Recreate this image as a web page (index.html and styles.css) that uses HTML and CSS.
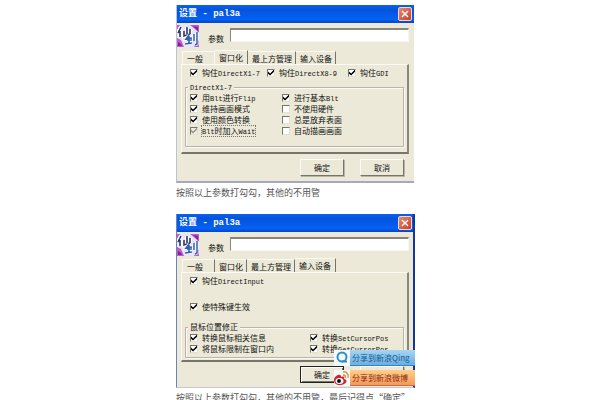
FILE: index.html
```html
<!DOCTYPE html>
<html lang="zh-CN">
<head>
    <meta charset="UTF-8">
    <meta name="viewport" content="width=device-width, initial-scale=1.0">
    <title>设置 - pal3a</title>
    <link rel="stylesheet" href="styles.css">
</head>
<body>
    <svg width="0" height="0" class="defs" aria-hidden="true">
        <symbol id="game-icon" viewBox="0 0 22 22">
            <rect width="22" height="22" fill="#e6e4fa"/>
            <path d="M0 0h3L0 5zM13 0h9v8l-3-3zM0 13l4 2 3 7H0zM20 17l2-2v7h-5z" fill="#c05ac8"/>
            <path d="M16 1l5 1v4l-3-3zM1 17l3 2 1 2H1z" fill="#7d2696"/>
            <path d="M4 2L1 8M3 6v6M7 6v5l6-2M10 2v7M13 4v5" stroke="#fff" stroke-width="4" fill="none"/>
            <path d="M4 2L1 8M3 6v6M7 6v5l6-2M10 2v7M13 4v5" stroke="#2c3566" stroke-width="1.6" fill="none"/>
            <path d="M12 10l-3 4 6-1M12 11v7M10 15h5M8 19l7-1M17 9v7M20 7v12l-2 1" stroke="#fff" stroke-width="3" fill="none"/>
            <path d="M12 10l-3 4 6-1M12 11v7M10 15h5M8 19l7-1M17 9v7M20 7v12l-2 1" stroke="#3560b0" stroke-width="1.5" fill="none"/>
        </symbol>
        <symbol id="close-icon" viewBox="0 0 14 14">
            <path d="M4 4l6 6M10 4l-6 6" stroke="#fff" stroke-width="1.7" stroke-linecap="round"/>
        </symbol>
    </svg>

    <main class="article">
        <section class="window">
            <header class="titlebar">
                <h2>设置 - pal3a</h2>
                <button class="close" aria-label="关闭"><svg><use href="#close-icon"/></svg></button>
            </header>
            <div class="params">
                <svg class="game-icon"><use href="#game-icon"/></svg>
                <label for="param1">参数</label>
                <input type="text" id="param1">
            </div>
            <nav class="tabs">
                <button class="first">一般</button>
                <button class="active">窗口化</button>
                <button>最上方管理</button>
                <button>输入设备</button>
            </nav>
            <div class="panel">
                <div class="hooks">
                    <label><input type="checkbox" checked><span>钩住<span class="en">DirectX1-7</span></span></label>
                    <label><input type="checkbox" checked><span>钩住<span class="en">DirectX8-9</span></span></label>
                    <label><input type="checkbox" checked><span>钩住<span class="en">GDI</span></span></label>
                </div>
                <fieldset>
                    <legend><span class="en">DirectX1-7</span></legend>
                    <div class="options">
                        <label><input type="checkbox" checked><span>用<span class="en">Blt</span>进行<span class="en">Flip</span></span></label>
                        <label><input type="checkbox" checked><span>进行基本<span class="en">Blt</span></span></label>
                        <label><input type="checkbox" checked><span>维持画面模式</span></label>
                        <label><input type="checkbox"><span>不使用硬件</span></label>
                        <label><input type="checkbox" checked><span>使用颜色转换</span></label>
                        <label><input type="checkbox"><span>总是放弃表面</span></label>
                        <label><input type="checkbox" class="dim" checked><span class="focus"><span class="en">Blt</span>时加入<span class="en">Wait</span></span></label>
                        <label><input type="checkbox"><span>自动描画画面</span></label>
                    </div>
                </fieldset>
            </div>
            <footer class="actions">
                <button>确定</button>
                <button>取消</button>
            </footer>
        </section>
        <p class="caption">按照以上参数打勾勾，其他的不用管</p>

        <section class="window second">
            <header class="titlebar">
                <h2>设置 - pal3a</h2>
                <button class="close" aria-label="关闭"><svg><use href="#close-icon"/></svg></button>
            </header>
            <div class="params">
                <svg class="game-icon"><use href="#game-icon"/></svg>
                <label for="param2">参数</label>
                <input type="text" id="param2">
            </div>
            <nav class="tabs">
                <button class="first">一般</button>
                <button>窗口化</button>
                <button>最上方管理</button>
                <button class="active">输入设备</button>
            </nav>
            <div class="panel">
                <div class="inputs">
                    <label><input type="checkbox" checked><span>钩住<span class="en">DirectInput</span></span></label>
                    <label><input type="checkbox" checked><span>使特殊键生效</span></label>
                </div>
                <fieldset>
                    <legend>鼠标位置修正</legend>
                    <div class="options wide">
                        <label><input type="checkbox" checked><span>转换鼠标相关信息</span></label>
                        <label><input type="checkbox" checked><span>转换<span class="en">SetCursorPos</span></span></label>
                        <label><input type="checkbox" checked><span>将鼠标限制在窗口内</span></label>
                        <label><input type="checkbox" checked><span>转换<span class="en">GetCursorPos</span></span></label>
                    </div>
                </fieldset>
            </div>
            <footer class="actions">
                <button class="default">确定</button>
                <button aria-label="取消"></button>
            </footer>
            <div class="share">
                <a href="#" class="qing">
                    <svg viewBox="0 0 16 16">
                        <circle cx="8" cy="7" r="4.5" fill="none" stroke="#2d8fca" stroke-width="2"/>
                        <path d="M8 11.500h5" stroke="#2d8fca" stroke-width="2"/>
                    </svg>
                    <span>分享到新浪Qing</span>
                </a>
                <a href="#" class="weibo">
                    <svg viewBox="0 0 16 16">
                        <path d="M0 10c0-3 4-6 6-5 1 0 1 1 1 2 3-1 4 0 3 2 5 1 2 6-4 6-4 0-6-2-6-5z" fill="#d7202b"/>
                        <ellipse cx="5.500" cy="11" rx="4" ry="3" fill="#fff"/>
                        <circle cx="5" cy="11" r="2" fill="#111"/>
                        <path d="M9 2c4-1 6 3 5 6M9 5c2 0 3 1 2 3" fill="none" stroke="#ed8b2e" stroke-width="1.4"/>
                    </svg>
                    <span>分享到新浪微博</span>
                </a>
            </div>
        </section>
        <p class="caption">按照以上参数打勾勾，其他的不用管，最后记得点“确定”</p>
    </main>
</body>
</html>
```

FILE: styles.css
```css
* {
    box-sizing: border-box;
}

body {
    margin: 0;
    height: 100vh;
    overflow: hidden;
    background-color: #fff;
    color: #111;
    font-family: "Noto Sans CJK SC", sans-serif;
    font-size: 8px;
    line-height: 11px;
}

button, input {
    font: inherit;
    color: inherit;
    margin: 0;
    padding: 0;
}

.defs {
    position: absolute;
}

.article {
    max-width: 248px;
    margin: 0 auto;
    padding-top: 5px;
}

.window {
    position: relative;
    margin-right: 10px;
    background-color: #ece9d8;
    border-left: 1px solid #b9c3d6;
    border-bottom: 2px solid #a5a9bb;
}

.second {
    margin-right: 9px;
    border-left-color: #6d86b4;
    border-right: 2px solid #12389c;
    border-bottom: 1px solid #c5c8d0;
}

.en {
    font-family: "Liberation Mono", monospace;
    font-size: 7px;
    line-height: 1;
}

.titlebar {
    display: flex;
    align-items: center;
    justify-content: space-between;
    height: 18px;
    padding: 0 2px;
    background: linear-gradient(#0a62ee, #0453dc 25%, #0561f5 80%, #0346c4);
}

.titlebar h2 {
    margin: 0;
    color: #fff;
    font-family: "Liberation Mono", "Noto Sans CJK SC", monospace;
    font-size: 9px;
}

.close {
    width: 14px;
    height: 14px;
    background: linear-gradient(135deg, #e58b72, #c93f26);
    border: 1px solid #f0d6d8;
    border-radius: 2px;
}

.second .close {
    margin-right: -1px;
}

.close svg {
    display: block;
    width: 12px;
    height: 12px;
}

.params {
    display: flex;
    align-items: center;
    height: 26px;
    padding-right: 5px;
}

.second .params {
    padding-right: 4px;
}

.game-icon {
    width: 22px;
    height: 22px;
}

.params label {
    margin: 4px 6px 0 9px;
}

.params input {
    flex: 1;
    min-width: 0;
    height: 14px;
    margin-bottom: 3px;
    background-color: #fff;
    border: 1px solid #f8f6ee;
    border-top: 2px solid #88867a;
    border-left-color: #88867a;
}

.tabs {
    display: flex;
    height: 15px;
    padding: 2px 0 0 5px;
}

.second .tabs {
    height: 14px;
    padding-top: 1px;
}

.tabs button {
    padding: 0 3px 0 4px;
    background: none;
    border: 0;
    border-top: 1px solid #faf9f3;
    border-right: 1px solid #77756a;
}

.tabs .first {
    width: 33px;
    padding-right: 11px;
    border-left: 1px solid #faf9f3;
}

.tabs button:nth-child(1):has(+ .active) {
    border-right-color: #faf9f3;
}

.tabs .active {
    line-height: 9px;
    margin-top: -1px;
    padding-right: 4px;
}

.panel {
    margin: 0 5px 0 4px;
    height: 90px;
    padding: 2px 2px 2px 3px;
    border: 1px solid #fbfaf4;
    border-right: 2px solid #8a887c;
    border-bottom: 2px solid #77756a;
}

.second .panel {
    margin-right: 4px;
}

.panel label {
    display: flex;
    align-items: center;
    height: 11px;
    white-space: nowrap;
}

.panel input {
    appearance: none;
    display: grid;
    place-items: center;
    width: 8px;
    height: 8px;
    margin-right: 4px;
    background-color: #fff;
    border: 1px solid #e4e1d2;
    border-top-color: #77756a;
    border-left-color: #77756a;
}

.panel input:checked::before {
    content: "";
    width: 6px;
    height: 6px;
    background-color: #000;
    clip-path: polygon(0 35%, 35% 65%, 100% 0, 100% 38%, 35% 100%, 0 70%);
}

.panel .dim {
    background-color: #f0eee2;
}

.panel .dim:checked::before {
    background-color: #99978b;
}

.hooks {
    display: flex;
    gap: 7px;
    padding-left: 5px;
}

.hooks label:last-child {
    margin-left: 4px;
}

fieldset {
    min-width: 0;
    margin: 4px 1px 0 0;
    padding: 0 0 10px 4px;
    border: 1px solid #b7b5a8;
    box-shadow: inset 1px 1px #faf9f3, 1px 1px #faf9f3;
}

legend {
    margin-left: -2px;
    padding: 0 2px;
    line-height: 10px;
    background-color: #ece9d8;
}

.options {
    display: grid;
    grid-template-columns: 92px 1fr;
}

.focus {
    height: 10px;
    line-height: 9px;
    outline: 1px dotted #77756a;
}

.inputs {
    display: grid;
    gap: 15px;
    padding-left: 5px;
}

.second fieldset {
    margin-top: 10px;
    padding-bottom: 3px;
}

.wide {
    grid-template-columns: 120px 1fr;
}

.actions {
    display: flex;
    justify-content: flex-end;
    gap: 16px;
    padding: 5px 10px;
    height: 27px;
}

.second .actions {
    height: 25px;
    padding: 4px 9px;
}

.actions button {
    width: 44px;
    height: 17px;
    background-color: #ece9d8;
    border: 1px solid #fbfaf4;
    border-right-color: #77756a;
    border-bottom-color: #77756a;
    box-shadow: 1px 1px #b7b5a8;
}

.actions .default {
    border-color: #222;
    box-shadow: inset 1px 1px #fff, inset -1px -1px #77756a;
}

.caption {
    margin: 4px 0 15px;
    color: #555;
    font-size: 9px;
    line-height: 12px;
    white-space: nowrap;
}

.caption:last-child {
    margin: 4px 0 0;
}

/* share links float over the lower right corner */
.share {
    position: absolute;
    right: -2px;
    bottom: 1px;
    display: grid;
    gap: 4px;
}

.share a {
    display: flex;
    align-items: center;
    gap: 2px;
    width: 81px;
    height: 16px;
    text-decoration: none;
    white-space: nowrap;
}

.share svg {
    width: 16px;
    height: 16px;
    background-color: #f4fafc;
}

.qing {
    color: #17598f;
    background: linear-gradient(#a7d5f2, #68afe2);
    border-bottom: 1px solid #3c82bc;
}

.weibo {
    color: #8b2b16;
    background: linear-gradient(#ffd08b, #f39a58);
    border-bottom: 1px solid #d66b3d;
}
```
